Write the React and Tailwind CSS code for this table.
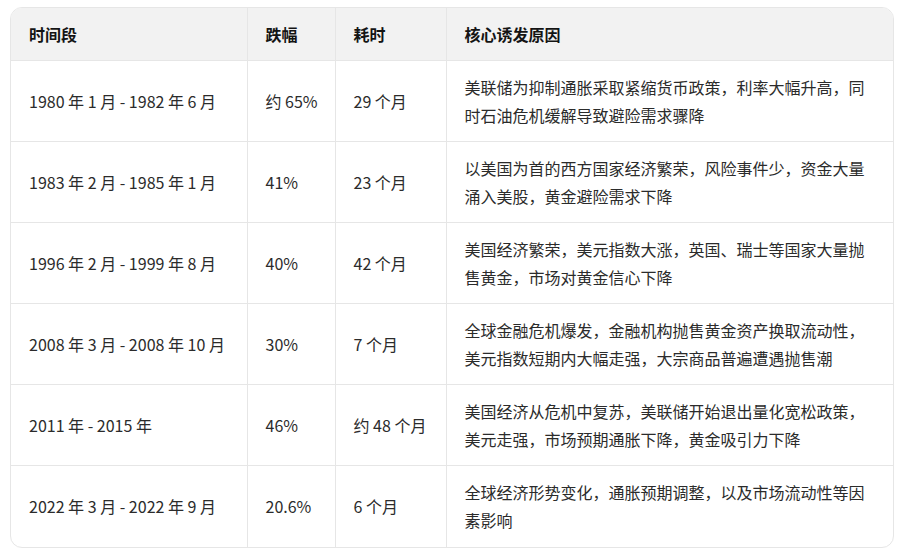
const rows = [
  ['1980 年 1 月 - 1982 年 6 月', '约 65%', '29 个月', '美联储为抑制通胀采取紧缩货币政策，利率大幅升高，同时石油危机缓解导致避险需求骤降'],
  ['1983 年 2 月 - 1985 年 1 月', '41%', '23 个月', '以美国为首的西方国家经济繁荣，风险事件少，资金大量涌入美股，黄金避险需求下降'],
  ['1996 年 2 月 - 1999 年 8 月', '40%', '42 个月', '美国经济繁荣，美元指数大涨，英国、瑞士等国家大量抛售黄金，市场对黄金信心下降'],
  ['2008 年 3 月 - 2008 年 10 月', '30%', '7 个月', '全球金融危机爆发，金融机构抛售黄金资产换取流动性，美元指数短期内大幅走强，大宗商品普遍遭遇抛售潮'],
  ['2011 年 - 2015 年', '46%', '约 48 个月', '美国经济从危机中复苏，美联储开始退出量化宽松政策，美元走强，市场预期通胀下降，黄金吸引力下降'],
  ['2022 年 3 月 - 2022 年 9 月', '20.6%', '6 个月', '全球经济形势变化，通胀预期调整，以及市场流动性等因素影响'],
];

const headers = ['时间段', '跌幅', '耗时', '核心诱发原因'];

export default function App() {
  return (
    <div className="min-h-screen bg-white pt-[7px] pl-[10px] font-['Microsoft_YaHei','Noto_Sans_CJK_SC',sans-serif]">
      <div className="w-[884px] border border-[#e6e6e6] rounded-xl overflow-hidden">
        <table className="w-full border-collapse table-fixed text-[16px] leading-[28px]">
          <colgroup>
            <col className="w-[236px]" />
            <col className="w-[88px]" />
            <col className="w-[111px]" />
            <col />
          </colgroup>
          <thead>
            <tr className="bg-[#f2f2f2]">
              {headers.map((h, i) => (
                <th
                  key={h}
                  className={`text-left font-bold text-[#141414] pl-[18px] pr-[18px] pt-[12px] pb-[12px] ${i > 0 ? 'border-l border-[#e6e6e6]' : ''}`}
                >
                  {h}
                </th>
              ))}
            </tr>
          </thead>
          <tbody>
            {rows.map((r) => (
              <tr key={r[0]} className="border-t border-[#e6e6e6] h-[81px]">
                {r.map((c, i) => (
                  <td
                    key={i}
                    className={`text-[#2b2b2b] align-middle pl-[18px] pr-[18px] py-[12px] ${i > 0 ? 'border-l border-[#e6e6e6]' : ''} ${i < 3 ? 'whitespace-nowrap' : ''}`}
                  >
                    {c}
                  </td>
                ))}
              </tr>
            ))}
          </tbody>
        </table>
      </div>
    </div>
  );
}
